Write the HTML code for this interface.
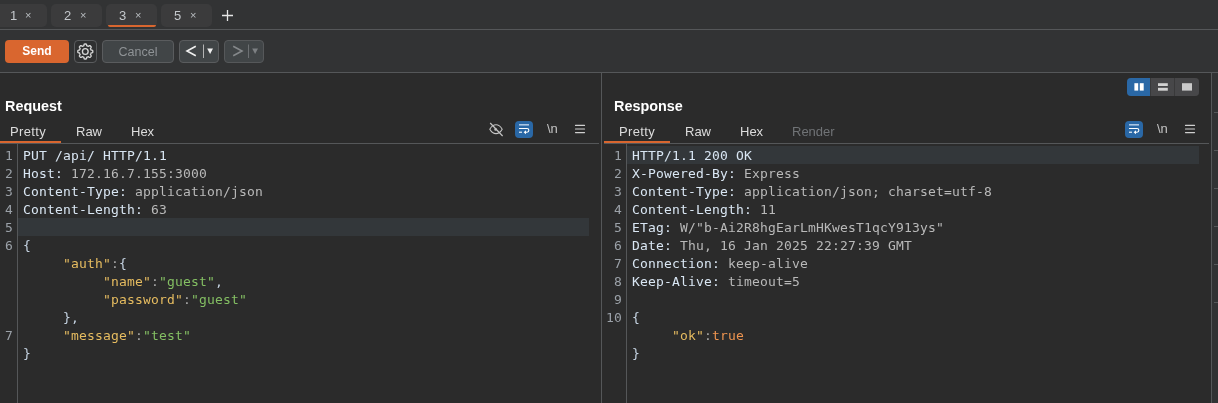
<!DOCTYPE html>
<html>
<head>
<meta charset="utf-8">
<title>Repeater</title>
<style>
*{box-sizing:border-box;margin:0;padding:0}
html,body{width:1218px;height:403px;overflow:hidden;background:#2b2b2b}
body{position:relative;will-change:transform;font-family:"Liberation Sans","DejaVu Sans",sans-serif;font-size:13px;color:#d6d6d6}
.abs{position:absolute}
#top{left:0;top:0;width:1218px;height:72px;background:#323334}
.hl{background:#555759;height:1px}
.vl{background:#555759;width:1px}
.tab{top:4px;height:23px;background:#3b3b3c;border-radius:5px;color:#c4c8cc;font-size:13px;line-height:23px}
.tab .x{font-size:11px;color:#b9bdc1}
.tab span{position:absolute;top:0}
.btn{top:40px;height:23px;border-radius:4px;font-size:13px;line-height:22px;text-align:center}
.ptitle{font-weight:bold;font-size:14.400px;color:#ffffff;top:97px;line-height:18px}
.vt{top:122px;height:20px;line-height:20px;font-size:13px;color:#dcdcdc}
.code{font-family:"DejaVu Sans Mono","Liberation Mono",monospace;font-size:13px;letter-spacing:0.174px;line-height:18px;white-space:pre;color:#b9b9b9}
.ln{color:#9ba1a8;text-align:right}
.h{color:#d9e6f3}
.k{color:#e6bc60}
.s{color:#84bf63}
.b{color:#ee9450}
.p{color:#c6d4e3}
.c{color:#a8a8a8}
</style>
</head>
<body>
<div id="top" class="abs"></div>
<!-- tab bar -->
<div class="abs tab" style="left:-4px;width:51px"><span style="left:14px">1</span><span class="x" style="left:29px">×</span></div>
<div class="abs tab" style="left:51px;width:51px"><span style="left:13px">2</span><span class="x" style="left:29px">×</span></div>
<div class="abs tab" style="left:106px;width:51px"><span style="left:13px">3</span><span class="x" style="left:29px">×</span></div>
<div class="abs" style="left:108px;top:25px;width:48px;height:2px;background:#d9662f;border-radius:0 0 3px 3px"></div>
<div class="abs tab" style="left:161px;width:51px"><span style="left:13px">5</span><span class="x" style="left:29px">×</span></div>
<svg class="abs" style="left:222px;top:10px" width="12" height="12" viewBox="0 0 12 12"><path d="M5.500 0V11M0 5.500H11" stroke="#e6e6e6" stroke-width="1.300" fill="none"/></svg>
<div class="abs hl" style="left:0;top:29px;width:1218px"></div>
<!-- toolbar -->
<div class="abs btn" style="left:5px;width:64px;background:#d9662f;color:#fff;font-weight:bold;font-size:12px;line-height:23px">Send</div>
<div class="abs btn" style="left:74px;width:23px;border:1px solid #5a5c5e;background:#2f3031"></div>
<svg class="abs" style="left:77px;top:43px" width="17" height="17" viewBox="0 0 17 17" fill="none" stroke="#d6d6d6" stroke-width="1.350" stroke-linejoin="round"><circle cx="8.3" cy="8.5" r="2.850"/><path d="M8.300 1.000L8.594 1.006L8.888 1.023L9.182 1.052L9.440 1.302L9.607 1.929L9.727 2.557L9.901 2.822L10.123 2.889L10.342 2.965L10.558 3.049L10.770 3.142L10.979 3.243L11.183 3.352L11.494 3.288L12.022 2.929L12.584 2.604L12.943 2.610L13.171 2.797L13.391 2.993L13.603 3.197L13.807 3.409L14.003 3.629L14.190 3.857L14.196 4.216L13.871 4.778L13.512 5.306L13.448 5.617L13.557 5.821L13.658 6.030L13.751 6.242L13.835 6.458L13.911 6.677L13.978 6.899L14.243 7.073L14.871 7.193L15.498 7.360L15.748 7.618L15.777 7.912L15.794 8.206L15.800 8.500L15.794 8.794L15.777 9.088L15.748 9.382L15.498 9.640L14.871 9.807L14.243 9.927L13.978 10.101L13.911 10.323L13.835 10.542L13.751 10.758L13.658 10.970L13.557 11.179L13.448 11.383L13.512 11.694L13.871 12.222L14.196 12.784L14.190 13.143L14.003 13.371L13.807 13.591L13.603 13.803L13.391 14.007L13.171 14.203L12.943 14.390L12.584 14.396L12.022 14.071L11.494 13.712L11.183 13.648L10.979 13.757L10.770 13.858L10.558 13.951L10.342 14.035L10.123 14.111L9.901 14.178L9.727 14.443L9.607 15.071L9.440 15.698L9.182 15.948L8.888 15.977L8.594 15.994L8.300 16.000L8.006 15.994L7.712 15.977L7.418 15.948L7.160 15.698L6.993 15.071L6.873 14.443L6.699 14.178L6.477 14.111L6.258 14.035L6.042 13.951L5.830 13.858L5.621 13.757L5.417 13.648L5.106 13.712L4.578 14.071L4.016 14.396L3.657 14.390L3.429 14.203L3.209 14.007L2.997 13.803L2.793 13.591L2.597 13.371L2.410 13.143L2.404 12.784L2.729 12.222L3.088 11.694L3.152 11.383L3.043 11.179L2.942 10.970L2.849 10.758L2.765 10.542L2.689 10.323L2.622 10.101L2.357 9.927L1.729 9.807L1.102 9.640L0.852 9.382L0.823 9.088L0.806 8.794L0.800 8.500L0.806 8.206L0.823 7.912L0.852 7.618L1.102 7.360L1.729 7.193L2.357 7.073L2.622 6.899L2.689 6.677L2.765 6.458L2.849 6.242L2.942 6.030L3.043 5.821L3.152 5.617L3.088 5.306L2.729 4.778L2.404 4.216L2.410 3.857L2.597 3.629L2.793 3.409L2.997 3.197L3.209 2.993L3.429 2.797L3.657 2.610L4.016 2.604L4.578 2.929L5.106 3.288L5.417 3.352L5.621 3.243L5.830 3.142L6.042 3.049L6.258 2.965L6.477 2.889L6.699 2.822L6.873 2.557L6.993 1.929L7.160 1.302L7.418 1.052L7.712 1.023L8.006 1.006z"/></svg>
<div class="abs btn" style="left:102px;width:72px;border:1px solid #5a5c5e;background:#414547;color:#8f9396;font-size:12.500px">Cancel</div>
<div class="abs btn" style="left:179px;width:40px;border:1px solid #5a5c5e;background:#414547"></div>
<div class="abs btn" style="left:224px;width:40px;border:1px solid #56585a;background:#414547"></div>
<svg class="abs" style="left:179px;top:40px" width="86" height="23" viewBox="0 0 86 23" fill="none"><path d="M16.800 6.200L8 11L16.800 15.800" stroke="#f0f0f0" stroke-width="1.600"/><path d="M24.500 4.500V18" stroke="#b4b4b4" stroke-width="1"/><path d="M28.200 8.500h5.800l-2.900 5.600z" fill="#f0f0f0"/><path d="M54.200 6.200L63 11L54.200 15.800" stroke="#85888b" stroke-width="1.600"/><path d="M69.500 4.500V18" stroke="#6d7073" stroke-width="1"/><path d="M73.200 8.500h5.800l-2.900 5.600z" fill="#7d8083"/></svg>
<div class="abs hl" style="left:0;top:72px;width:1218px"></div>
<!-- panel separators -->
<div class="abs vl" style="left:601px;top:73px;height:330px"></div>
<div class="abs vl" style="left:1211px;top:73px;height:330px"></div>
<div class="abs" style="left:1212px;top:73px;width:6px;height:330px;background:#323334"></div>
<div class="abs" style="left:1214px;top:112px;width:4px;height:1px;background:#555759;box-shadow:0 38px 0 #555759,0 76px 0 #555759,0 114px 0 #555759,0 152px 0 #555759,0 190px 0 #555759"></div>
<!-- layout buttons -->
<div class="abs" style="left:1127px;top:78px;width:72px;height:18px;border-radius:4px;background:#39393a;overflow:hidden">
<div class="abs" style="left:0;top:0;width:23px;height:18px;background:#2a68a6"></div>
<div class="abs" style="left:24px;top:0;width:23px;height:18px;background:#474749"></div>
<div class="abs" style="left:48px;top:0;width:24px;height:18px;background:#474749"></div>
<svg class="abs" style="left:0;top:0" width="72" height="18" viewBox="0 0 72 18"><rect x="7.400" y="5.200" width="3.800" height="7.400" fill="#fff"/><rect x="12.800" y="5.200" width="3.900" height="7.400" fill="#fff"/><rect x="31" y="5.200" width="9.800" height="2.800" fill="#d2d2d2"/><rect x="31" y="9.800" width="9.800" height="2.900" fill="#d2d2d2"/><rect x="55" y="5.200" width="10" height="7.400" fill="#cacaca"/></svg>
</div>
<!-- Request panel -->
<div class="abs ptitle" style="left:5px">Request</div>
<div class="abs vt" style="left:10px;letter-spacing:0.350px">Pretty</div>
<div class="abs vt" style="left:76px">Raw</div>
<div class="abs vt" style="left:131px">Hex</div>
<div class="abs hl" style="left:0;top:143px;width:599px"></div>
<div class="abs" style="left:0;top:141px;width:61px;height:2px;background:#d9662f"></div>
<svg class="abs" style="left:488px;top:118px" width="100" height="24" viewBox="0 0 100 24" fill="none"><path d="M1.800 11.200C3.600 8 5.600 6.800 8 6.800S12.400 8 14.200 11.200C12.400 14.400 10.400 15.600 8 15.600S3.600 14.400 1.800 11.200z" stroke="#c4c4c4" stroke-width="1.100"/><circle cx="7.600" cy="11.400" r="1.300" fill="#c4c4c4"/><path d="M2.200 5L14.600 18" stroke="#c4c4c4" stroke-width="1.200"/><rect x="27" y="3" width="18" height="17" rx="4" fill="#2a68a6"/><path d="M31 6.800H41" stroke="#a9c5e2" stroke-width="1.600"/><path d="M31 10.500H39A1.850 1.850 0 0 1 39 14.200H37.500" stroke="#fff" stroke-width="1.100"/><path d="M38 12.200L35.600 14.200L38 16.200z" fill="#fff"/><path d="M31 14.200H34" stroke="#fff" stroke-width="1.100"/><path d="M87.500 7.400H96.500M87.500 11H96.500M87.500 14.600H96.500" stroke="#cfcfcf" stroke-width="1.200" stroke-linecap="round"/></svg>
<div class="abs" style="left:547px;top:121px;font-size:13px;line-height:16px;color:#c4c4c4">\n</div>
<!-- Response panel -->
<div class="abs ptitle" style="left:614px">Response</div>
<div class="abs vt" style="left:619px;letter-spacing:0.350px">Pretty</div>
<div class="abs vt" style="left:685px">Raw</div>
<div class="abs vt" style="left:740px">Hex</div>
<div class="abs vt" style="left:792px;color:#707376">Render</div>
<div class="abs hl" style="left:604px;top:143px;width:605px"></div>
<div class="abs" style="left:604px;top:141px;width:66px;height:2px;background:#d9662f"></div>
<svg class="abs" style="left:1098px;top:118px" width="100" height="24" viewBox="0 0 100 24" fill="none"><rect x="27" y="3" width="18" height="17" rx="4" fill="#2a68a6"/><path d="M31 6.800H41" stroke="#a9c5e2" stroke-width="1.600"/><path d="M31 10.500H39A1.850 1.850 0 0 1 39 14.200H37.500" stroke="#fff" stroke-width="1.100"/><path d="M38 12.200L35.600 14.200L38 16.200z" fill="#fff"/><path d="M31 14.200H34" stroke="#fff" stroke-width="1.100"/><path d="M87.500 7.400H96.500M87.500 11H96.500M87.500 14.600H96.500" stroke="#cfcfcf" stroke-width="1.200" stroke-linecap="round"/></svg>
<div class="abs" style="left:1157px;top:121px;font-size:13px;line-height:16px;color:#c4c4c4">\n</div>
<!-- request code -->
<div class="abs" style="left:18px;top:218px;width:571px;height:18px;background:#33373a"></div>
<div class="abs vl" style="left:17px;top:144px;height:259px"></div>
<div class="abs code ln" style="left:0;top:147px;width:13px">1
2
3
4
5
6




7</div>
<div class="abs code" style="left:23px;top:147px"><span class="h">PUT /api/ HTTP/1.1</span>
<span class="h">Host:</span> 172.16.7.155:3000
<span class="h">Content-Type:</span> application/json
<span class="h">Content-Length:</span> 63

<span class="p">{</span>
     <span class="k">"auth"</span><span class="c">:</span><span class="p">{</span>
          <span class="k">"name"</span><span class="c">:</span><span class="s">"guest"</span><span class="p">,</span>
          <span class="k">"password"</span><span class="c">:</span><span class="s">"guest"</span>
     <span class="p">}</span><span class="p">,</span>
     <span class="k">"message"</span><span class="c">:</span><span class="s">"test"</span>
<span class="p">}</span></div>
<!-- response code -->
<div class="abs" style="left:627px;top:146px;width:572px;height:18px;background:#33373a"></div>
<div class="abs vl" style="left:626px;top:144px;height:259px"></div>
<div class="abs code ln" style="left:600px;top:147px;width:22px">1
2
3
4
5
6
7
8
9
10</div>
<div class="abs code" style="left:632px;top:147px"><span class="h">HTTP/1.1 200 OK</span>
<span class="h">X-Powered-By:</span> Express
<span class="h">Content-Type:</span> application/json; charset=utf-8
<span class="h">Content-Length:</span> 11
<span class="h">ETag:</span> W/"b-Ai2R8hgEarLmHKwesT1qcY913ys"
<span class="h">Date:</span> Thu, 16 Jan 2025 22:27:39 GMT
<span class="h">Connection:</span> keep-alive
<span class="h">Keep-Alive:</span> timeout=5

<span class="p">{</span>
     <span class="k">"ok"</span><span class="c">:</span><span class="b">true</span>
<span class="p">}</span></div>
</body>
</html>
